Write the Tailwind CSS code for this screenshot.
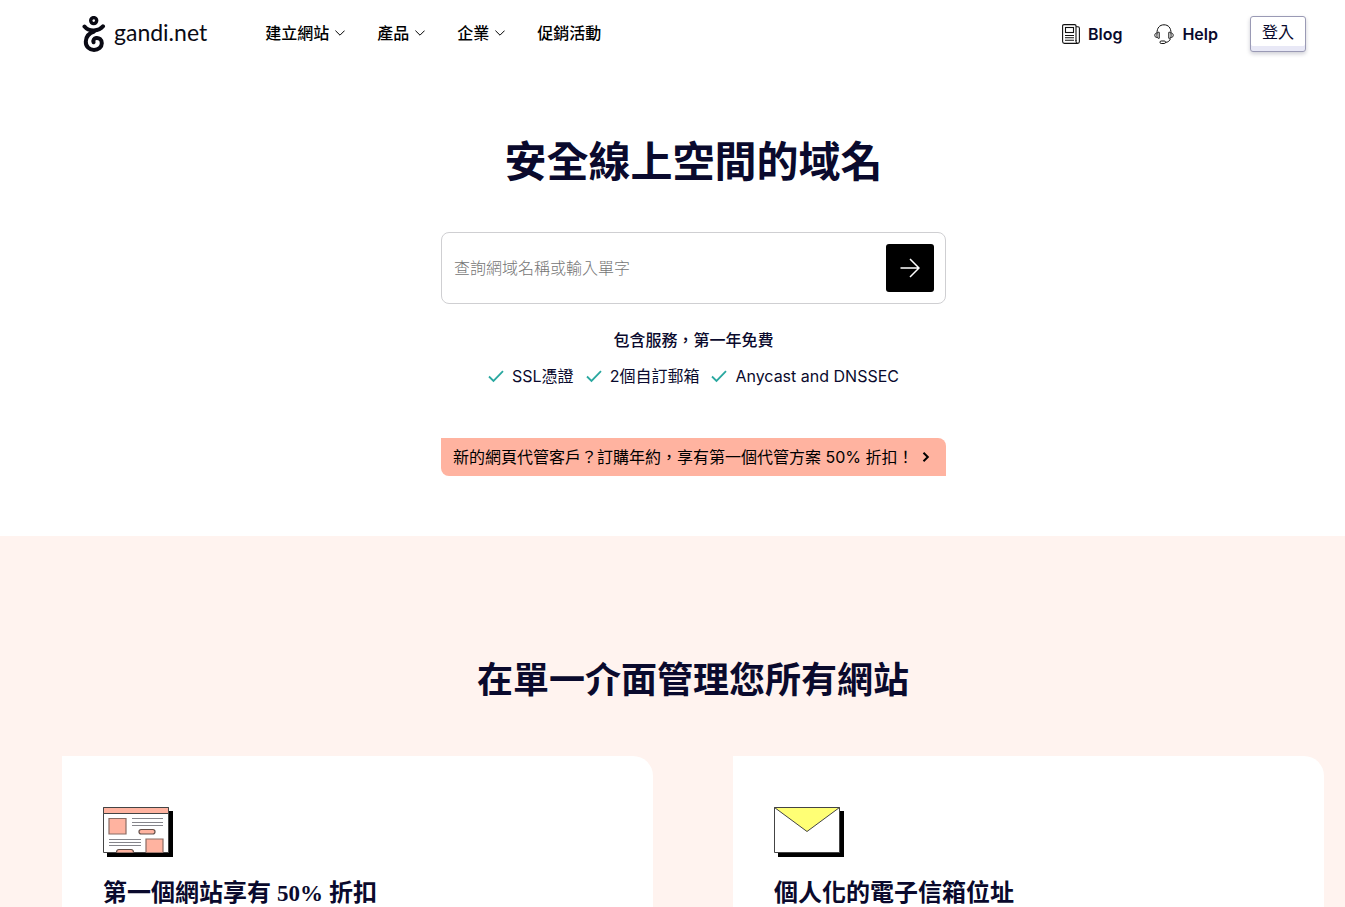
<!DOCTYPE html>
<html lang="zh-Hant">
<head>
    <meta charset="UTF-8">
    <meta name="viewport" content="width=device-width, initial-scale=1.0">
    <title>Gandi.net</title>
    <script src="https://cdn.jsdelivr.net/npm/@tailwindcss/browser@4"></script>
</head>
<body class="flex min-h-screen flex-col bg-white font-['Inter','Noto_Sans_CJK_TC',sans-serif] text-base text-[#0a0a2d]">

    <header class="flex items-center py-4 pl-[82px] pr-[39px]">
        <a href="#" class="flex h-9 items-center gap-2" aria-label="gandi.net">
            <svg class="h-9 w-6" viewBox="0 0 24 36" fill="none" stroke="#0a0a14" stroke-width="4" stroke-linecap="round">
                <circle cx="11.700" cy="4.600" r="3" stroke-width="3.400"/>
                <path d="M2.500 10.500C5 13.500 8.500 14.600 12 14.400C16 14.200 19 12.800 21 10.300"/>
                <path d="M12 15.500C7.500 17 4 20.500 3.800 25.500C3.600 30.500 7.500 34 12 34C16.500 34 19.800 31 19.800 27.200C19.800 23.600 17 21.600 14.300 22C12 22.400 10.800 24.200 11.600 26.300"/>
            </svg>
            <span class="pb-1 font-['Lato',sans-serif] text-[23px] leading-8 text-[#0a0a14]">gandi.net</span>
        </a>

        <nav class="ml-[58px] pb-0.5 text-black">
            <ul class="flex gap-8 font-medium leading-6">
                <li>
                    <a href="#" class="flex items-center gap-1.5">建立網站
                        <svg class="w-2.5" viewBox="0 0 10 6" fill="none" stroke="currentColor"><path d="M.4.6 5 5.200 9.600.6"/></svg>
                    </a>
                </li>
                <li>
                    <a href="#" class="flex items-center gap-1.5">產品
                        <svg class="w-2.5" viewBox="0 0 10 6" fill="none" stroke="currentColor"><path d="M.4.6 5 5.200 9.600.6"/></svg>
                    </a>
                </li>
                <li>
                    <a href="#" class="flex items-center gap-1.5">企業
                        <svg class="w-2.5" viewBox="0 0 10 6" fill="none" stroke="currentColor"><path d="M.4.6 5 5.200 9.600.6"/></svg>
                    </a>
                </li>
                <li><a href="#">促銷活動</a></li>
            </ul>
        </nav>

        <div class="ml-auto flex items-center gap-8">
            <a href="#" class="flex items-center gap-2 font-semibold leading-6">
                <svg class="h-5 w-[18px]" viewBox="0 0 18 20" fill="none" stroke="#111" stroke-width="1.100">
                    <path d="M14 17V2Q14 .6 12.600.6H2Q.6.6.6 2V17.500Q.6 19.400 2.500 19.400H15.500"/>
                    <path d="M14 2.800H16Q17.400 2.800 17.400 4.200V17.500Q17.400 19.400 15.700 19.400Q14 19.400 14 17.500V16"/>
                    <rect x="3.500" y="3.500" width="8" height="5"/>
                    <path d="M3 11.500H12M3 13.800H12M3 16.200H12"/>
                </svg>
                Blog
            </a>
            <a href="#" class="flex items-center gap-2 font-semibold leading-6">
                <svg class="h-5 w-5" viewBox="0 0 20 20" fill="none" stroke="#111">
                    <path d="M3 9C3 4 5.500.8 10 .8S17 4 17 9"/>
                    <path d="M5.200 8.300C3.800 7.900 2.900 8.900 2.900 11.200S3.800 14.700 5.200 14.300Z"/>
                    <path d="M14.800 8.300C16.200 7.900 17.100 8.900 17.100 11.200S16.200 14.700 14.800 14.300Z"/>
                    <path d="M2.800 9C1.300 9.200.8 10.200.8 11.300S1.300 13.300 2.800 13.500M17.200 9C18.700 9.200 19.200 10.200 19.200 11.300S18.700 13.300 17.200 13.500"/>
                    <path d="M16.500 14.500C15.800 17 14 18.200 11.500 18.400"/>
                    <rect x="6" y="17" width="5.500" height="2.500" rx="1.200"/>
                </svg>
                Help
            </a>
            <button type="button" class="h-9 w-14 rounded-[3px] border border-[#9a9ab5] bg-white pb-1 shadow-[inset_0_-5px_0_#e8e8f6,0_2px_4px_#0a0a2d33]">登入</button>
        </div>
    </header>

    <main class="flex grow flex-col">
        <section class="pb-[60px] pl-[62px] pr-5 pt-[69px]">
            <h1 class="text-center text-[42px] font-bold leading-[50px]">安全線上空間的域名</h1>

            <div class="mx-auto mt-[45px] max-w-[505px]">
                <form class="flex h-[72px] items-center rounded-lg border border-[#cfcfd2] pl-3 pr-[11px]">
                    <input type="text" aria-label="查詢網域名稱或輸入單字" placeholder="查詢網域名稱或輸入單字" class="h-12 min-w-0 grow font-light outline-none placeholder:text-[#757575]">
                    <button type="button" aria-label="查詢" class="flex size-12 items-center justify-center rounded-[3px] bg-black">
                        <svg class="size-5" viewBox="0 0 20 20" fill="none" stroke="#fff" stroke-width="1.500"><path d="M.5 10H19M10 1 19 10 10 19"/></svg>
                    </button>
                </form>

                <p class="mt-6 text-center font-medium leading-6">包含服務，第一年免費</p>
                <ul class="mt-3 flex justify-center gap-3 leading-6">
                    <li class="flex items-center gap-2">
                        <svg class="size-4" viewBox="0 0 16 16" fill="none" stroke="#2aa8a0" stroke-width="1.800"><path d="M1 8.500 5.500 13 15 3.200"/></svg>
                        SSL憑證
                    </li>
                    <li class="flex items-center gap-2">
                        <svg class="size-4" viewBox="0 0 16 16" fill="none" stroke="#2aa8a0" stroke-width="1.800"><path d="M1 8.500 5.500 13 15 3.200"/></svg>
                        2個自訂郵箱
                    </li>
                    <li class="flex items-center gap-2">
                        <svg class="size-4" viewBox="0 0 16 16" fill="none" stroke="#2aa8a0" stroke-width="1.800"><path d="M1 8.500 5.500 13 15 3.200"/></svg>
                        Anycast and DNSSEC
                    </li>
                </ul>

                <a href="#" class="mt-[50px] flex h-[38px] items-center justify-between rounded-bl-lg rounded-tr-lg bg-[#ffb3a0] pl-3 pr-4 text-black">
                    <span class="whitespace-nowrap">新的網頁代管客戶？訂購年約，享有第一個代管方案 50% 折扣！</span>
                    <svg class="h-2.5 w-2 shrink-0" viewBox="0 0 8 10" fill="none" stroke="#000" stroke-width="2"><path d="M1.500.8 5.800 5 1.500 9.200"/></svg>
                </a>
            </div>
        </section>

        <section class="flex grow flex-col bg-[#fff3ef] pl-[62px] pr-[21px] pt-[122px]">
            <h2 class="text-center text-4xl font-bold leading-[44px]">在單一介面管理您所有網站</h2>

            <div class="mt-[54px] grid grow grid-cols-2 gap-20">
                <article class="rounded-tr-[20px] bg-white px-[41px] pt-[51px]">
                    <svg class="h-[50px] w-[70px]" viewBox="0 0 70 50">
                        <path d="M4 4H70V50H4Z"/>
                        <path d="M.5.5H65.500V45.500H.5Z" fill="#fff" stroke="#444"/>
                        <path d="M.5.5H65.500V6.500H.5Z" fill="#ffb3a0" stroke="#444"/>
                        <g fill="#ffb3a0" stroke="#8a6c64" stroke-width="1.200">
                            <path d="M6 11.500H23V27H6ZM43 45.500V32H60V45.500"/>
                            <rect x="36" y="22.500" width="16" height="4.500" rx="2.200" stroke="#65504a"/>
                            <path d="M13.500 45.500Q13.500 42.500 16 42.500H28Q30.500 42.500 30.500 45.500" stroke="#65504a"/>
                        </g>
                        <path d="M29 11.500H60M29 15.500H60M29 18.500H60M6 32.500H38M6 35.500H38M6 38.500H38" stroke="#85858b"/>
                    </svg>
                    <h3 class="mt-[22px] font-['Liberation_Serif','Noto_Sans_CJK_TC',serif] text-2xl font-bold leading-7">第一個網站享有 <span class="text-[23px]">50%</span> 折扣</h3>
                </article>
                <article class="rounded-tr-[20px] bg-white px-[41px] pt-[51px]">
                    <svg class="h-[50px] w-[70px]" viewBox="0 0 70 50">
                        <path d="M4 4H70V50H4Z"/>
                        <path d="M.5.5H65.500V45.500H.5Z" fill="#fff" stroke="#444"/>
                        <path d="M.5.5H65.500L33 24.500Z" fill="#ffff75" stroke="#444"/>
                    </svg>
                    <h3 class="mt-[22px] font-['Liberation_Serif','Noto_Sans_CJK_TC',serif] text-2xl font-bold leading-7">個人化的電子信箱位址</h3>
                </article>
            </div>
        </section>
    </main>

</body>
</html>
